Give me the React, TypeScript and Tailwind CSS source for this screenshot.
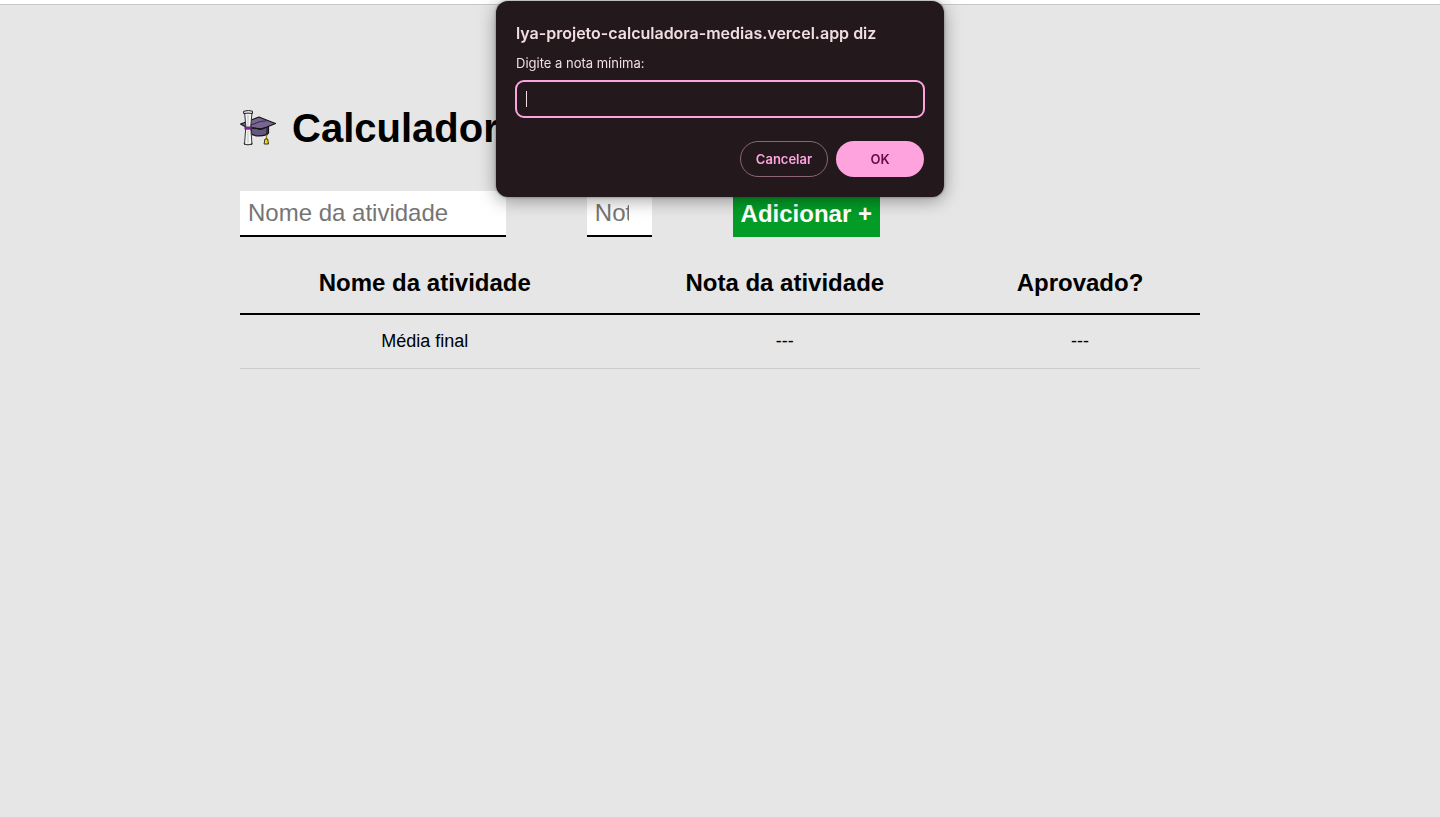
import { useId } from "react";

function GraduationIcon() {
  return (
    <svg viewBox="0 0 36 36" className="size-9 shrink-0" aria-hidden="true" strokeLinejoin="round" strokeLinecap="round">
      <path d="M11 17v6.500c3 3.500 14 3 17.500-.5V16z" fill="#655680" stroke="#15131a" strokeWidth="1.200" />
      <path d="M.5 14L6 12v5zM10 10.500L19 7l5 2 11.500 4.500L27 17l-6 1.800-10-1z" fill="#77668f" stroke="#15131a" strokeWidth="1.200" />
      <path d="M11.500 14.500c4-.5 6-2.500 9-3s4 0 6-.8" fill="none" stroke="#332b42" strokeWidth="1" />
      <path d="M11 18c3-1 6 1 9 1.500 3-.2 5-1.500 7-2.500v8" fill="none" stroke="#15131a" strokeWidth="1" />
      <path d="M26.500 25v4" fill="none" stroke="#8c7e18" strokeWidth="1.200" />
      <path d="M25.300 29h2.400l.8 5h-4z" fill="#f0da1c" stroke="#3c3510" strokeWidth="1" />
      <path d="M5 2.500h7L10.700 17l1.300 17.500H4.500L5.800 17z" fill="#f3f5f4" stroke="#333" strokeWidth="1" />
      <path d="M4 1.200q4.500-1.500 8.500 0v2.300q-4.500-.8-8.500 0zM4 33.500q4 3 8 0" fill="#e8ebea" stroke="#222" strokeWidth="1" />
      <path d="M8 5v11M8 21v11.500" fill="none" stroke="#bcbfbe" strokeWidth="1" />
      <path d="M5.300 17h6v2.200h-6z" fill="#8e2ca3" stroke="#5b1a6c" strokeWidth=".8" />
    </svg>
  );
}

function Prompt() {
  const id = useId();
  return (
    <div
      role="dialog"
      aria-labelledby={id + "title"}
      className="fixed top-px left-1/2 flex w-[448px] max-w-full -translate-x-1/2 flex-col rounded-xl bg-[#23191c] p-5 font-[Inter,sans-serif] text-[#f2dde1] shadow-[0_3px_18px_rgba(0,0,0,0.38),0_0_3px_rgba(0,0,0,0.4)]"
    >
      <h2 id={id + "title"} className="text-base leading-6 font-semibold">
        lya-projeto-calculadora-medias.vercel.app diz
      </h2>
      <label htmlFor={id + "value"} className="mt-2 text-[13px] leading-5">
        Digite a nota mínima:
      </label>
      <div className="-mx-px mt-[7px] flex h-[38px] items-center rounded-[9px] border-2 border-[#ffa3df] px-[9px]">
        <span className="h-4 w-px bg-[#f2dde1]" aria-hidden="true" />
        <input id={id + "value"} type="text" className="min-w-0 flex-1 bg-transparent text-[13px] outline-none" />
      </div>
      <div className="mt-[23px] flex justify-end gap-2 text-[13px] font-semibold">
        <button type="button" className="h-9 w-22 rounded-full border border-[#8c6578] pt-0.5 text-[#ffa3df]">
          Cancelar
        </button>
        <button type="button" className="h-9 w-22 rounded-full bg-[#ffa3df] pt-0.5 text-[#650a43]">
          OK
        </button>
      </div>
    </div>
  );
}

export default function App() {
  return (
    <div className="flex min-h-screen flex-col bg-[#e6e6e6] font-['Liberation_Sans',Arial,sans-serif] text-black">
      <div className="h-[5px] border-b border-[#c8c8c8] bg-white" />
      <main className="mx-auto w-full max-w-[960px] pt-[100px]">
        <header className="flex items-center gap-4">
          <GraduationIcon />
          <h1 className="text-[40px] leading-[46px] font-bold whitespace-nowrap">Calculadora de médias</h1>
        </header>
        <form className="mt-10 flex w-2/3 justify-between text-2xl" onSubmit={(e) => e.preventDefault()}>
          <input
            type="text"
            aria-label="Nome da atividade"
            placeholder="Nome da atividade"
            className="h-[46px] w-[266px] border-b-2 border-black bg-white px-2 placeholder:text-[#757575]"
          />
          <input
            type="text"
            inputMode="decimal"
            aria-label="Nota da atividade"
            placeholder="Nota da atividade"
            className="h-[46px] w-[65px] border-b-2 border-black bg-white pr-[23px] pl-2 placeholder:text-[#757575]"
          />
          <button type="submit" className="h-[46px] bg-[#029c27] px-2 font-bold whitespace-nowrap text-white">
            Adicionar +
          </button>
        </form>
        <table className="mt-4 w-full table-fixed border-collapse text-center">
          <thead>
            <tr className="h-[61px] border-b-2 border-black text-2xl">
              <th className="w-[38.5%]">Nome da atividade</th>
              <th className="w-[36.5%]">Nota da atividade</th>
              <th className="w-1/4">Aprovado?</th>
            </tr>
          </thead>
          <tbody>
            <tr className="h-[54px] border-b border-[#cccccc] text-lg">
              <td>Média final</td>
              <td>---</td>
              <td>---</td>
            </tr>
          </tbody>
        </table>
      </main>
      <Prompt />
    </div>
  );
}
